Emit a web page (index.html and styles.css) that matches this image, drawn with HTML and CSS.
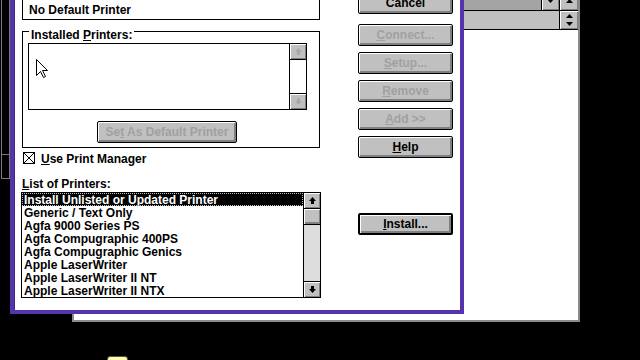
FILE: index.html
```html
<!DOCTYPE html>
<html>
<head>
<meta charset="utf-8">
<title>Printers</title>
<link rel="stylesheet" href="styles.css">
</head>
<body>
<div class="desk">
  <div class="sidewin"><div class="sidewin-split"></div></div>

  <div class="backwin">
    <div class="bw-title">
      <div class="bw-fill"></div>
      <div class="bw-btn bw-min"><svg width="7" height="4" viewBox="0 0 7 4"><path d="M0 0H7L3.5 4Z" fill="#000"/></svg></div>
      <div class="bw-btn bw-max"><svg width="7" height="4" viewBox="0 0 7 4"><path d="M0 4H7L3.5 0Z" fill="#000"/></svg></div>
    </div>
    <div class="bw-bar">
      <div class="bw-fill2"></div>
      <div class="bw-btn bw-spin"><svg width="7" height="12" viewBox="0 0 7 12"><path d="M0 4H7L3.5 0Z M0 8H7L3.5 12Z" fill="#000"/></svg></div>
    </div>
    <div class="bw-body"></div>
  </div>

  <div class="dialog">
    <div class="col-left">
      <div class="defbox">No Default Printer</div>

      <div class="group">
        <span class="group-label">Installed <u>P</u>rinters:</span>
        <div class="listbox small">
          <div class="list-area"></div>
          <div class="vscroll off">
            <div class="sbtn up"><svg width="7" height="7" viewBox="0 0 7 7"><path d="M3.5 0L7 4H5V7H2V4H0Z"/></svg></div>
            <div class="track plain"></div>
            <div class="sbtn down"><svg width="7" height="7" viewBox="0 0 7 7"><path d="M3.5 7L7 3H5V0H2V3H0Z"/></svg></div>
          </div>
        </div>
        <button class="btn off setdef"><span>Se<u>t</u> As Default Printer</span></button>
      </div>

      <div class="check">
        <svg class="checkbox" width="12" height="12" viewBox="0 0 12 12"><rect x="0.5" y="0.5" width="11" height="11" fill="#fff" stroke="#000"/><path d="M1 1L11 11M11 1L1 11" stroke="#000" stroke-width="1"/></svg>
        <span class="check-text"><u>U</u>se Print Manager</span>
      </div>

      <div class="list-label"><u>L</u>ist of Printers:</div>

      <div class="listbox big">
        <ul class="list-area items">
          <li class="sel">Install Unlisted or Updated Printer</li>
          <li>Generic / Text Only</li>
          <li>Agfa 9000 Series PS</li>
          <li>Agfa Compugraphic 400PS</li>
          <li>Agfa Compugraphic Genics</li>
          <li>Apple LaserWriter</li>
          <li>Apple LaserWriter II NT</li>
          <li>Apple LaserWriter II NTX</li>
        </ul>
        <div class="vscroll">
          <div class="sbtn up"><svg width="7" height="7" viewBox="0 0 7 7"><path d="M3.5 0L7 4H5V7H2V4H0Z"/></svg></div>
          <div class="thumb"></div>
          <div class="track"></div>
          <div class="sbtn down"><svg width="7" height="7" viewBox="0 0 7 7"><path d="M3.5 7L7 3H5V0H2V3H0Z"/></svg></div>
        </div>
      </div>
    </div>

    <div class="col-right">
      <button class="btn"><span>Cancel</span></button>
      <button class="btn off gap-first"><span><u>C</u>onnect...</span></button>
      <button class="btn off"><span><u>S</u>etup...</span></button>
      <button class="btn off"><span><u>R</u>emove</span></button>
      <button class="btn off"><span><u>A</u>dd &gt;&gt;</span></button>
      <button class="btn"><span><u>H</u>elp</span></button>
      <button class="btn default install"><span><u>I</u>nstall...</span></button>
    </div>
  </div>

  <svg class="cursor" width="13" height="20" viewBox="0 0 13 20"><path d="M0.5 0.5V16.5L4.5 12.5L7.5 18.5L9.5 17.5L6.5 11.5H11.5Z" fill="#fff" stroke="#000" stroke-width="1"/></svg>
  <div class="folder"></div>
</div>
</body>
</html>
```

FILE: styles.css
```css
* { box-sizing: border-box; }
html, body { margin: 0; padding: 0; }
body {
  width: 640px;
  height: 360px;
  overflow: hidden;
  background: #000;
  font-family: "Liberation Sans", Arial, sans-serif;
  font-weight: bold;
  font-size: 12px;
  line-height: 13px;
  color: #000;
}
u { text-decoration: underline; text-underline-offset: 1px; }
.desk { position: relative; width: 640px; height: 360px; overflow: hidden; }

/* window at far left */
.sidewin {
  position: absolute;
  left: 1px; top: -2px;
  width: 10px; height: 181px;
  border: 1px solid #7a7a7a;
  border-right-width: 2px;
}
.sidewin-split {
  margin-top: 155px;
  border-top: 1px solid #7a7a7a;
}

/* window behind the dialog */
.backwin {
  position: absolute;
  left: 72px; top: -10px;
  width: 508px; height: 332px;
  border: 2px solid #8a8a8a;
  background: #fff;
  display: flex;
  flex-direction: column;
}
.bw-title {
  display: flex;
  height: 19px;
  border-bottom: 1px solid #000;
  background: #a4a4a4;
}
.bw-fill { flex: 1; }
.bw-btn {
  background: #c0c0c0;
  border-left: 1px solid #000;
  box-shadow: inset 1px 1px #fff, inset -1px -1px #808080;
  display: flex;
  align-items: center;
  justify-content: center;
}
.bw-min { width: 18px; }
.bw-max { width: 19px; }
.bw-bar {
  display: flex;
  height: 19px;
  border-bottom: 1px solid #000;
  background: #c0c0c0;
}
.bw-fill2 { flex: 1; }
.bw-spin { width: 19px; }
.bw-body { flex: 1; }

/* dialog */
.dialog {
  position: absolute;
  left: 10px; top: -12px;
  width: 454px; height: 326px;
  background: #fff;
  border: 4px solid #5634ac;
  box-shadow: inset 1px 1px 0 #3a2a80;
  padding: 0 7px 0 8px;
  display: flex;
  gap: 37px;
}
.col-left { width: 299px; display: flex; flex-direction: column; }
.col-right { width: 95px; display: flex; flex-direction: column; }

.defbox {
  margin-top: 2px;
  width: 298px;
  height: 26px;
  border: 1px solid #000;
  padding: 9px 6px 0;
}

.group {
  position: relative;
  margin-top: 11px;
  width: 298px;
  height: 117px;
  border: 1px solid #000;
  padding: 11px 0 0 5px;
  display: flex;
  flex-direction: column;
  align-items: flex-start;
}
.group-label {
  position: absolute;
  left: 6px; top: -3px;
  padding: 0 2px;
  background: #fff;
}

.listbox {
  border: 1px solid #000;
  display: flex;
  background: #fff;
}
.listbox.small { width: 279px; height: 67px; }
.listbox.big { margin-top: 1px; margin-left: -1px; width: 300px; height: 106px; }
.list-area { flex: 1; margin: 0; padding: 0; list-style: none; }

.items li {
  height: 13px;
  padding: 1px 0 0 2px;
  white-space: nowrap;
}
.items li.sel {
  background: #000;
  color: #fff;
  outline: 1px dotted #bdbdbd;
  outline-offset: -1px;
}

.vscroll {
  width: 17px;
  border-left: 1px solid #000;
  display: flex;
  flex-direction: column;
}
.sbtn {
  height: 16px;
  background: #c0c0c0;
  box-shadow: inset 1px 1px #fff, inset -1px -1px #808080;
  display: flex;
  align-items: center;
  justify-content: center;
}
.sbtn svg path { fill: #000; }
.sbtn.up { border-bottom: 1px solid #000; }
.sbtn.down { border-top: 1px solid #000; }
.vscroll.off .sbtn svg path { fill: #a8a8a8; }
.thumb {
  height: 16px;
  background: #c0c0c0;
  border-bottom: 1px solid #000;
  box-shadow: inset 1px 1px #fff, inset -1px -2px #808080;
}
.track {
  flex: 1;
  background: #dcdcdc;
}
.track.plain { background: #fff; }

.btn {
  display: flex;
  align-items: center;
  justify-content: center;
  width: 95px;
  height: 22px;
  padding: 0;
  margin: 6px 0 0;
  font: inherit;
  color: #000;
  background: #c0c0c0;
  border: 1px solid #000;
  border-radius: 2px;
  box-shadow: inset 1px 1px #fff, inset -2px -2px #808080;
  white-space: nowrap;
}
.btn:first-child { margin-top: 0; }
.btn.off { color: #a0a0a0; }
.btn.gap-first { margin-top: 10px; }
.btn.default { border-width: 2px; }
.btn.install { margin-top: 55px; }
.setdef { width: 140px; margin: 11px 0 0 69px; }

.check {
  margin-top: 4px;
  display: flex;
  align-items: flex-start;
  gap: 6px;
  padding-left: 1px;
}
.checkbox { display: block; }
.check-text { padding-top: 1px; }

.list-label { margin-top: 12px; height: 13px; }

.cursor { position: absolute; left: 36px; top: 59px; }
.folder {
  position: absolute;
  left: 107px; top: 356px;
  width: 21px; height: 6px;
  background: #ffffa8;
  border: 1px solid #505050;
  border-radius: 3px 3px 0 0;
}
```
